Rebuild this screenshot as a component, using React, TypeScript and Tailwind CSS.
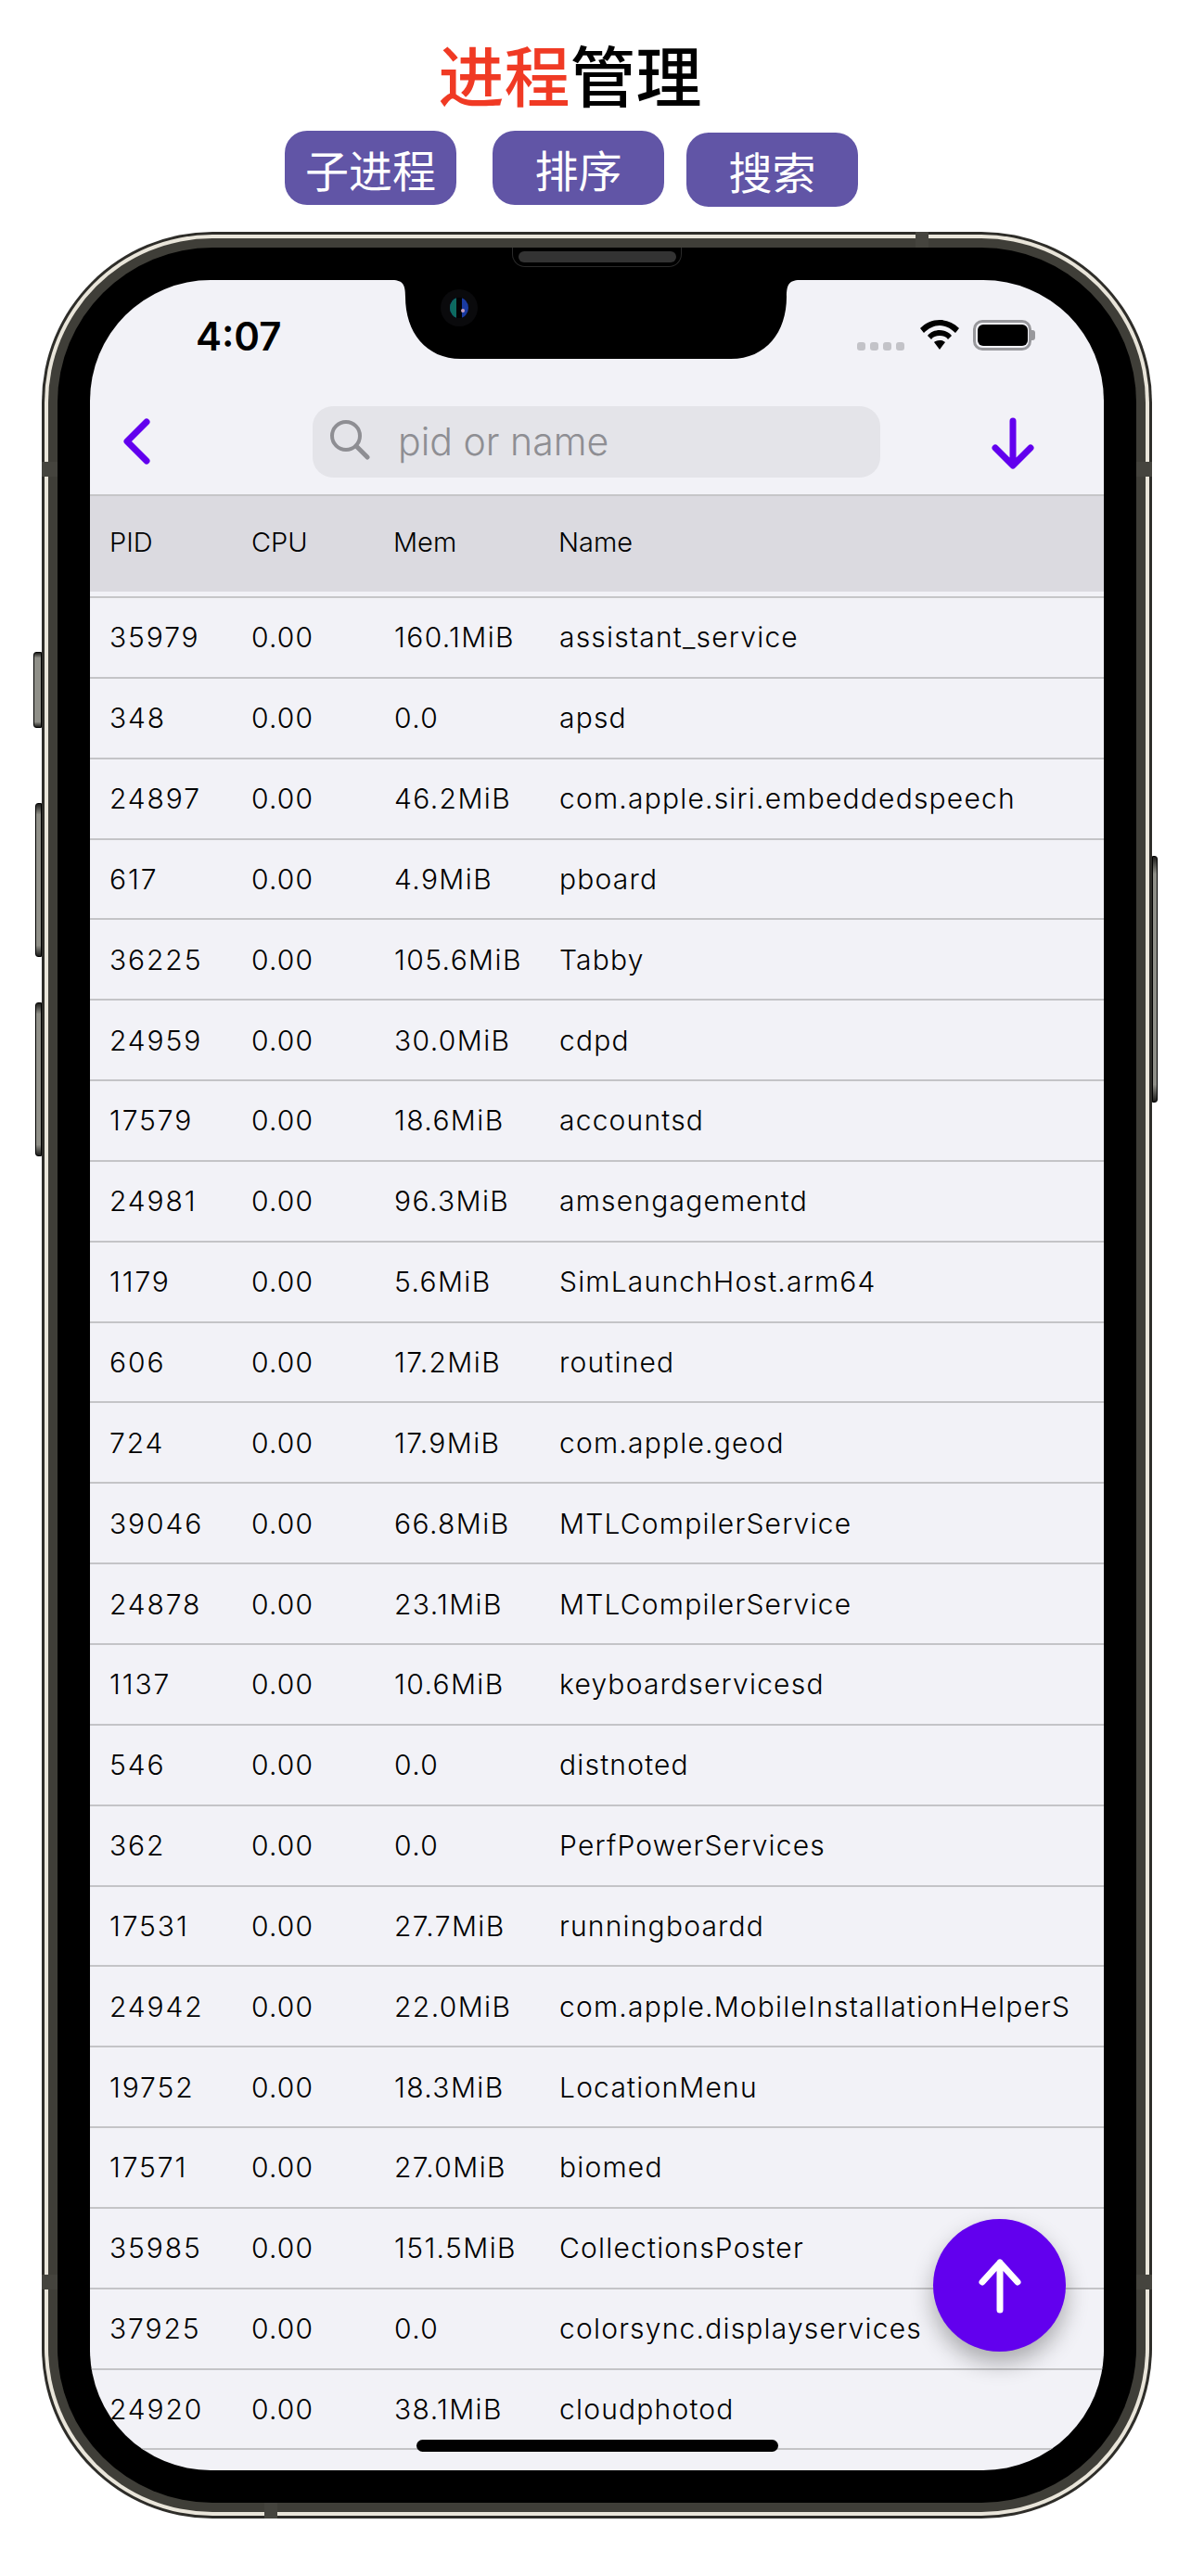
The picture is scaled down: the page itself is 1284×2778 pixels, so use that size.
const rows: [string, string, string, string][] = [
  ["35979", "0.00", "160.1MiB", "assistant_service"],
  ["348", "0.00", "0.0", "apsd"],
  ["24897", "0.00", "46.2MiB", "com.apple.siri.embeddedspeech"],
  ["617", "0.00", "4.9MiB", "pboard"],
  ["36225", "0.00", "105.6MiB", "Tabby"],
  ["24959", "0.00", "30.0MiB", "cdpd"],
  ["17579", "0.00", "18.6MiB", "accountsd"],
  ["24981", "0.00", "96.3MiB", "amsengagementd"],
  ["1179", "0.00", "5.6MiB", "SimLaunchHost.arm64"],
  ["606", "0.00", "17.2MiB", "routined"],
  ["724", "0.00", "17.9MiB", "com.apple.geod"],
  ["39046", "0.00", "66.8MiB", "MTLCompilerService"],
  ["24878", "0.00", "23.1MiB", "MTLCompilerService"],
  ["1137", "0.00", "10.6MiB", "keyboardservicesd"],
  ["546", "0.00", "0.0", "distnoted"],
  ["362", "0.00", "0.0", "PerfPowerServices"],
  ["17531", "0.00", "27.7MiB", "runningboardd"],
  ["24942", "0.00", "22.0MiB", "com.apple.MobileInstallationHelperS"],
  ["19752", "0.00", "18.3MiB", "LocationMenu"],
  ["17571", "0.00", "27.0MiB", "biomed"],
  ["35985", "0.00", "151.5MiB", "CollectionsPoster"],
  ["37925", "0.00", "0.0", "colorsync.displayservices"],
  ["24920", "0.00", "38.1MiB", "cloudphotod"],
  ["", "", "", ""],
];

function ActionButton({ label, className }: { label: string; className: string }) {
  return (
    <div className={`flex h-[80px] w-[185px] items-center justify-center rounded-[24px] bg-[#6155a6] text-[47px] leading-none text-white ${className}`}>
      {label}
    </div>
  );
}

const sideKey =
  "absolute border border-black bg-[linear-gradient(to_bottom,#1c1c1a,#8f8f88_7%,#8f8f88_93%,#1c1c1a)]";

export default function App() {
  return (
    <div className="h-[2778px] w-[1284px] overflow-hidden bg-white font-['Noto_Sans_CJK_SC',sans-serif]">
      <h1 className="pt-[38px] pr-[55px] pb-[6px] text-center text-[71px] leading-[80px] font-medium text-black [&>span]:text-[#f03a24]">
        <span>进程</span>管理
      </h1>
      <div className="mt-[17px] ml-[307px] flex items-start">
        <ActionButton label="子进程" className="" />
        <ActionButton label="排序" className="ml-[39px]" />
        <ActionButton label="搜索" className="mt-[2px] ml-[24px]" />
      </div>

      <div className="relative mt-[27px] ml-[45px] h-[2466px] w-[1197px] rounded-[184px] bg-[#2e2d29] p-[3px]">
        {/* side hardware */}
        <div className={`${sideKey} top-[453px] -left-[9px] h-[82px] w-[9px] rounded-l-[3px]`} />
        <div className={`${sideKey} top-[616px] -left-[7px] h-[166px] w-[7px] rounded-l-[3px]`} />
        <div className={`${sideKey} top-[831px] -left-[7px] h-[166px] w-[7px] rounded-l-[3px]`} />
        <div className={`${sideKey} top-[673px] -right-[6px] h-[266px] w-[6px] rounded-r-[3px]`} />

        <div className="h-full w-full rounded-[181px] bg-[#e9e5da] p-[4px]">
          <div className="h-full w-full rounded-[177px] bg-[#3f3e38] p-[10px]">
            <div className="relative h-full w-full rounded-[167px] bg-black p-[35px]">
              {/* screen */}
              <div className="relative h-full w-full overflow-hidden rounded-[130px] bg-[#f2f2f7] font-['Inter',sans-serif] text-black">
                {/* status bar */}
                <div className="flex h-[136px] items-start">
                  <span className="mt-[36px] ml-[114px] text-[42px] leading-[50px] font-semibold">4:07</span>
                  <div className="mt-[67px] ml-[621px] flex gap-[5px]">
                    <i className="h-[9px] w-[9px] rounded-[3px] bg-[#c3c3c8]" />
                    <i className="h-[9px] w-[9px] rounded-[3px] bg-[#c3c3c8]" />
                    <i className="h-[9px] w-[9px] rounded-[3px] bg-[#c3c3c8]" />
                    <i className="h-[9px] w-[9px] rounded-[3px] bg-[#c3c3c8]" />
                  </div>
                  <svg className="mt-[43px] ml-[17px]" width="42" height="32" viewBox="0 0 42 32">
                    <path d="M21 0C13 0 6 3 0 9l4 5C9 9 15 6 21 6s12 3 17 8l4-5C36 3 29 0 21 0z" />
                    <path d="M21 11c-5 0-10 2-13 6l4 4c2-3 5-4 9-4s7 1 9 4l4-4c-3-4-8-6-13-6z" />
                    <path d="M21 22c-3 0-5 1-6 2l6 8 6-8c-1-1-3-2-6-2z" />
                  </svg>
                  <div className="mt-[43px] ml-[15px] flex h-[33px] w-[63px] items-center justify-center rounded-[10px] border-[3px] border-[#98989c]">
                    <div className="h-[23px] w-[54px] rounded-[6px] bg-black" />
                  </div>
                  <div className="mt-[54px] h-[11px] w-[4px] rounded-r-[3px] bg-[#98989c]" />
                </div>

                {/* toolbar */}
                <div className="flex h-[95px] items-start">
                  <svg className="mt-[13px] ml-[36px]" width="30" height="50" viewBox="0 0 30 50" fill="none" stroke="#6200ee" strokeWidth="7" strokeLinecap="round" strokeLinejoin="round">
                    <path d="M25 4 4 25l21 21" />
                  </svg>
                  <div className="ml-[174px] flex h-[77px] w-[612px] items-center rounded-[22px] bg-[#e4e4e9]">
                    <svg className="mb-[6px] ml-[18px]" width="44" height="44" viewBox="0 0 44 44" fill="none" stroke="#8e8e93" strokeWidth="4" strokeLinecap="round">
                      <circle cx="18" cy="18" r="15" />
                      <path d="M29 29l12 12" strokeWidth="5" />
                    </svg>
                    <span className="ml-[30px] text-[41px] leading-none font-[350] text-[#8e8e93]">pid or name</span>
                  </div>
                  <svg className="mt-[12px] ml-[118px]" width="50" height="56" viewBox="0 0 50 56" fill="none" stroke="#6200ee" strokeWidth="7" strokeLinecap="round" strokeLinejoin="round">
                    <path d="M25 4v47M6 33l19 19 19-19" />
                  </svg>
                </div>

                {/* table header */}
                <div className="flex h-[105px] items-center border-t-2 border-[#c6c6c8] bg-[#dbdae0] pb-[3px] text-[29px] font-[350]">
                  <span className="ml-[21px] w-[153px]">PID</span>
                  <span className="w-[153px]">CPU</span>
                  <span className="w-[178px]">Mem</span>
                  <span>Name</span>
                </div>

                {/* rows */}
                <div className="mt-[5px] border-t-2 border-[#c6c6c8]">
                  {rows.map((r, i) => (
                    <div key={i} className="flex h-[86.85px] items-center border-b-2 border-[#c4c4c7] pt-[1px] text-[30px] font-[350] whitespace-nowrap">
                      <span className="ml-[21px] w-[153px] tracking-[1.9px]">{r[0]}</span>
                      <span className="w-[154px] tracking-[1.2px]">{r[1]}</span>
                      <span className="w-[178px] tracking-[1.4px]">{r[2]}</span>
                      <span className="tracking-[1.2px]">{r[3]}</span>
                    </div>
                  ))}
                </div>

                {/* floating button */}
                <div className="absolute right-[41px] bottom-[128px] flex h-[143px] w-[143px] items-center justify-center rounded-full bg-[#6200ee] shadow-[0_12px_24px_rgba(0,0,0,0.3)]">
                  <svg width="52" height="60" viewBox="0 0 52 60" fill="none" stroke="white" strokeWidth="7" strokeLinecap="round" strokeLinejoin="round">
                    <path d="M26 56V5M7 26 26 5l19 21" />
                  </svg>
                </div>

                {/* home indicator */}
                <div className="absolute bottom-[20px] left-[352px] h-[13px] w-[390px] rounded-full bg-black" />
              </div>

              {/* notch */}
              <svg className="absolute top-[35px] left-[361px]" width="439" height="86" viewBox="0 0 439 86">
                <path d="M0 0h439c-12 0-14 6-14 18 0 38-22 67-60 67H74C36 85 14 56 14 18 14 6 12 0 0 0z" fill="#000" />
                <circle cx="72" cy="30" r="20" fill="#0a0a0c" />
                <ellipse cx="72" cy="30" rx="10" ry="11" fill="#1a3aa0" />
                <path d="M72 19a10 11 0 0 0 0 22z" fill="#0d6a60" />
                <rect x="69" y="19" width="6" height="22" fill="#020204" />
                <circle cx="76" cy="33" r="2" fill="#c8a0c0" />
              </svg>
            </div>
          </div>
        </div>

        {/* earpiece */}
        <div className="absolute top-[17px] left-[507px] flex h-[21px] w-[183px] items-center justify-center rounded-b-[14px] border border-t-0 border-[#2a2a2a]">
          <div className="h-[12px] w-[170px] rounded-[6px] bg-[#333333]" />
        </div>

        {/* antenna bands */}
        <div className="absolute top-0 left-[942px] h-[17px] w-[14px] bg-[#45443e]" />
        <div className="absolute top-[248px] left-0 h-[16px] w-[17px] bg-[#45443e]" />
        <div className="absolute top-[248px] right-0 h-[16px] w-[17px] bg-[#45443e]" />
        <div className="absolute top-[2203px] left-0 h-[16px] w-[17px] bg-[#45443e]" />
        <div className="absolute top-[2203px] right-0 h-[16px] w-[17px] bg-[#45443e]" />
        <div className="absolute bottom-0 left-[240px] h-[17px] w-[14px] bg-[#45443e]" />
      </div>
    </div>
  );
}
